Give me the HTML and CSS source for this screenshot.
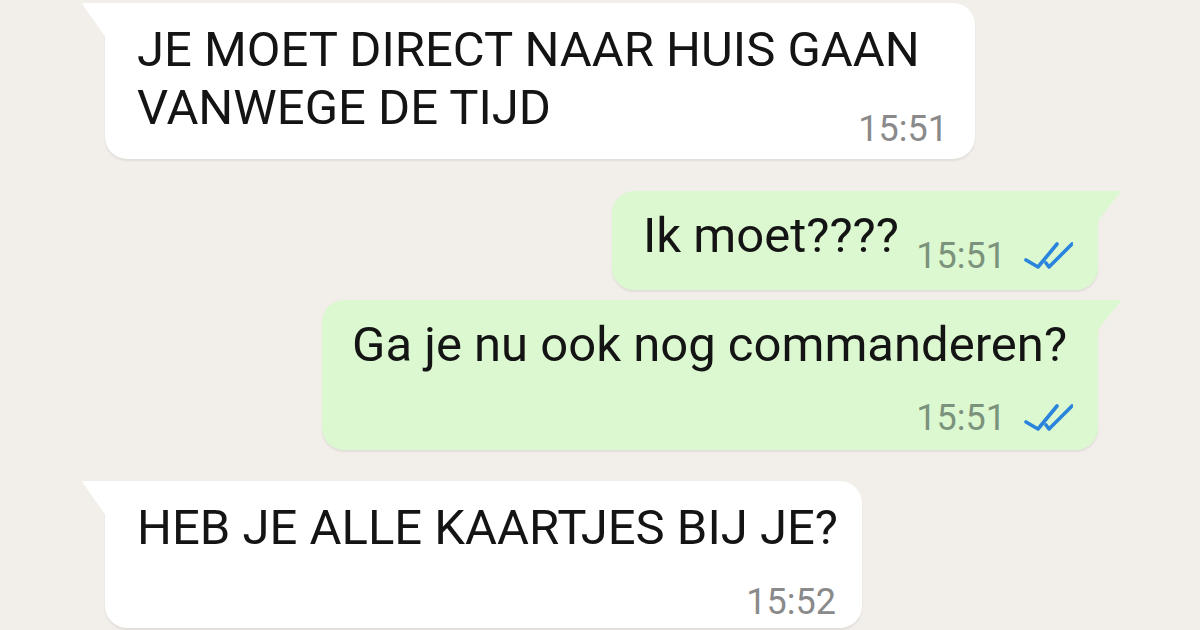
FILE: index.html
```html
<!DOCTYPE html>
<html lang="nl">
<head>
  <meta charset="UTF-8" />
  <meta name="viewport" content="width=device-width, initial-scale=1" />
  <title>Chat</title>
  <link rel="stylesheet" href="styles.css">
</head>
<body>

  <div class="chat">
    <div class="bubble in bubble-1">
      <p class="tekst">JE MOET DIRECT NAAR HUIS GAAN<br>VANWEGE DE TIJD</p>
      <span class="meta">15:51</span>
    </div>

    <div class="bubble out bubble-2">
      <p class="tekst">Ik moet????</p>
      <span class="meta">15:51
        <svg class="vinkjes" viewBox="0 0 50 30" aria-hidden="true">
          <path d="M3 19 L15 26 L34 3" />
          <path d="M23 22 L26 26 L49 3" />
        </svg>
      </span>
    </div>

    <div class="bubble out bubble-3">
      <p class="tekst">Ga je nu ook nog commanderen?</p>
      <span class="meta">15:51
        <svg class="vinkjes" viewBox="0 0 50 30" aria-hidden="true">
          <path d="M3 19 L15 26 L34 3" />
          <path d="M23 22 L26 26 L49 3" />
        </svg>
      </span>
    </div>

    <div class="bubble in bubble-4">
      <p class="tekst">HEB JE ALLE KAARTJES BIJ JE?</p>
      <span class="meta">15:52</span>
    </div>
  </div>

</body>
</html>
```

FILE: styles.css
```css
:root {
  --achtergrond: #f2efea;
  --wit: #ffffff;
  --groen: #dbf8d0;
  --tekst: #141414;
  --grijs: #8a8a8a;
  --grijs-groen: #7b927c;
  --blauw: #2a84dc;
}

* {
  margin: 0;
  padding: 0;
  box-sizing: border-box;
}

html, body {
  height: 100%;
  overflow: hidden;
}

body {
  font-family: Roboto, 'Noto Sans', Arial, sans-serif;
  background-color: var(--achtergrond);
  color: var(--tekst);
  -webkit-font-smoothing: antialiased;
}

.chat {
  display: flex;
  flex-direction: column;
  padding-top: 3px;
}

/* Bubbels */
.bubble {
  position: relative;
  border-radius: 22px;
  box-shadow: 0 2px 2px rgba(0, 0, 0, 0.07);
}

.bubble .tekst {
  font-size: 49px;
  line-height: 58px;
  white-space: nowrap;
}

.meta {
  font-size: 36px;
  line-height: 40px;
  white-space: nowrap;
}

.in {
  align-self: flex-start;
  margin-left: 105px;
  background: var(--wit);
  border-top-left-radius: 0;
}

.in .meta {
  color: var(--grijs);
}

.in::before {
  content: "";
  position: absolute;
  top: 0;
  left: -23px;
  width: 25px;
  height: 36px;
  background: var(--wit);
  clip-path: polygon(0 0, 100% 0, 100% 100%, 6% 8%);
}

.out {
  align-self: flex-end;
  margin-right: 102px;
  background: var(--groen);
  border-top-right-radius: 0;
}

.out .meta {
  color: var(--grijs-groen);
  display: flex;
  align-items: center;
  gap: 17px;
}

.out::before {
  content: "";
  position: absolute;
  top: 0;
  right: -23px;
  width: 25px;
  height: 32px;
  background: var(--groen);
  clip-path: polygon(0 0, 100% 0, 94% 8%, 0 100%);
}

.vinkjes {
  width: 50px;
  height: 30px;
  fill: none;
  stroke: var(--blauw);
  stroke-width: 3.6;
  stroke-linecap: round;
  stroke-linejoin: round;
}

/* Per bericht */
.bubble-1 {
  width: 870px;
  padding: 18px 27px 10px 32px;
}

.bubble-1 .meta {
  display: block;
  text-align: right;
  margin-top: -28px;
}

.bubble-2 {
  width: 486px;
  margin-top: 32px;
  padding: 16px 25px 14px 31px;
  display: flex;
  align-items: flex-end;
}

.bubble-2 .tekst {
  margin-bottom: 11px;
}

.bubble-2 .meta {
  margin-left: auto;
}

.bubble-3 {
  width: 776px;
  margin-top: 10px;
  padding: 16px 25px 12px 30px;
  display: flex;
  flex-direction: column;
}

.bubble-3 .meta {
  align-self: flex-end;
  margin-top: 24px;
}

.bubble-4 {
  width: 757px;
  margin-top: 31px;
  padding: 18px 26px 6px 32px;
}

.bubble-4 .meta {
  display: block;
  text-align: right;
  margin-top: 25px;
}
```
